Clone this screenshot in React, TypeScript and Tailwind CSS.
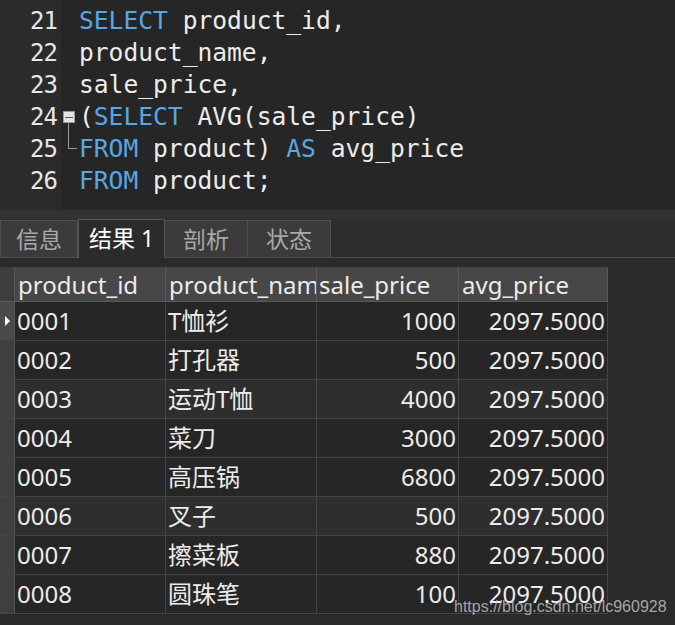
import React from 'react';

const mono = { fontFamily: '"DejaVu Sans Mono", "Liberation Mono", monospace' };
const ui = { fontFamily: '"Noto Sans", "Noto Sans CJK SC", sans-serif' };

const rows = [
  ['0001', 'T恤衫', '1000'],
  ['0002', '打孔器', '500'],
  ['0003', '运动T恤', '4000'],
  ['0004', '菜刀', '3000'],
  ['0005', '高压锅', '6800'],
  ['0006', '叉子', '500'],
  ['0007', '擦菜板', '880'],
  ['0008', '圆珠笔', '100'],
];

const Kw = ({ children }: { children: React.ReactNode }) => (
  <span className="text-[#56a8e4]">{children}</span>
);

export default function App() {
  return (
    <div className="relative w-[675px] h-[625px] overflow-hidden bg-[#2a2a2a] text-[#ececec]">
      {/* editor */}
      <div className="flex h-[210px]">
        <div className="w-[61px] bg-[#2b2b2b] pt-[5px] pr-[4px] text-right text-[24px] text-[#e6e6e6]" style={mono}>
          {[21, 22, 23, 24, 25, 26].map((n) => (
            <div key={n} className="h-[32px] leading-[32px] tracking-[-1px]">{n}</div>
          ))}
        </div>
        <div className="relative flex-1 bg-[#262626] pt-[5px] pl-[18px] text-[24.6px] whitespace-pre" style={mono}>
          <div className="h-[32px] leading-[32px]"><Kw>SELECT</Kw> product_id,</div>
          <div className="h-[32px] leading-[32px]">product_name,</div>
          <div className="h-[32px] leading-[32px]">sale_price,</div>
          <div className="h-[32px] leading-[32px]">(<Kw>SELECT</Kw> AVG(sale_price)</div>
          <div className="h-[32px] leading-[32px]"><Kw>FROM</Kw> product) <Kw>AS</Kw> avg_price</div>
          <div className="h-[32px] leading-[32px]"><Kw>FROM</Kw> product;</div>
          {/* fold marker */}
          <div className="absolute left-[2px] top-[111px] w-[12px] h-[12px] border border-[#9a9a9a] bg-[#e4e4e4] flex items-center justify-center">
            <div className="w-[8px] h-[1px] bg-[#555]" />
          </div>
          <div className="absolute left-[7px] top-[123px] w-[1px] h-[26px] bg-[#9a9a9a]" />
          <div className="absolute left-[7px] top-[148px] w-[9px] h-[1px] bg-[#9a9a9a]" />
        </div>
      </div>

      <div className="h-[9px] bg-[#323232]" />

      {/* tabs */}
      <div className="flex items-end h-[39px] border-b border-[#4e4e4e] bg-[#2d2d2d] text-[23px]" style={ui}>
        <div className="w-[78px] h-[37px] flex items-center justify-center bg-[#3b3b3b] border border-b-0 border-[#505050] text-[#a8a8a8]">信息</div>
        <div className="w-[87px] h-[39px] flex items-center justify-center bg-[#2b2b2b] border border-b-0 border-[#555] text-white -mb-px pb-px">结果 1</div>
        <div className="w-[83px] h-[37px] flex items-center justify-center bg-[#3b3b3b] border border-b-0 border-l-0 border-[#505050] text-[#a8a8a8]">剖析</div>
        <div className="w-[83px] h-[37px] flex items-center justify-center bg-[#3b3b3b] border border-b-0 border-l-0 border-[#505050] text-[#a8a8a8]">状态</div>
      </div>

      {/* grid */}
      <div className="mt-[9px] w-[608px] text-[24px]" style={ui}>
        <div className="flex h-[35px] bg-[#474747] border-b border-[#5a5a5a]">
          <div className="w-[15px] bg-[#3d3d3d] border-r border-[#555]" />
          <div className="w-[151px] pl-[3px] leading-[36px] border-r border-[#5a5a5a] overflow-hidden whitespace-nowrap">product_id</div>
          <div className="w-[151px] pl-[3px] leading-[36px] border-r border-[#5a5a5a] overflow-hidden whitespace-nowrap">product_name</div>
          <div className="w-[142px] pl-[2px] leading-[36px] border-r border-[#5a5a5a] overflow-hidden whitespace-nowrap">sale_price</div>
          <div className="w-[149px] pl-[3px] leading-[36px] border-r border-[#5a5a5a] overflow-hidden whitespace-nowrap">avg_price</div>
        </div>
        {rows.map(([id, name, price], i) => (
          <div key={id} className={`flex h-[39px] border-b border-[#444] ${i === 2 || i === 5 ? 'bg-[#2e2e2e]' : 'bg-[#262626]'}`}>
            <div className={`w-[15px] flex items-center border-r border-[#555] ${i === 0 ? 'bg-[#4a4a4a]' : 'bg-[#3f3f3f]'}`}>
              {i === 0 && (
                <div className="ml-[5px] w-0 h-0 border-y-[5px] border-y-transparent border-l-[5px] border-l-white" />
              )}
            </div>
            <div className="w-[151px] pl-[2px] leading-[37px] border-r border-[#444]">{id}</div>
            <div className="w-[151px] pl-[2px] leading-[37px] border-r border-[#444]">{name}</div>
            <div className="w-[142px] pr-[2px] leading-[37px] text-right border-r border-[#444]">{price}</div>
            <div className="w-[149px] pr-[2px] leading-[37px] text-right border-r border-[#444]">2097.5000</div>
          </div>
        ))}
      </div>

      {/* watermark */}
      <div
        className="absolute left-[454px] top-[595px] text-[16px] text-[#c8c8c8]/80"
        style={{ fontFamily: '"Liberation Sans", Arial, sans-serif' }}
      >
        https://blog.csdn.net/lc960928
      </div>
    </div>
  );
}
